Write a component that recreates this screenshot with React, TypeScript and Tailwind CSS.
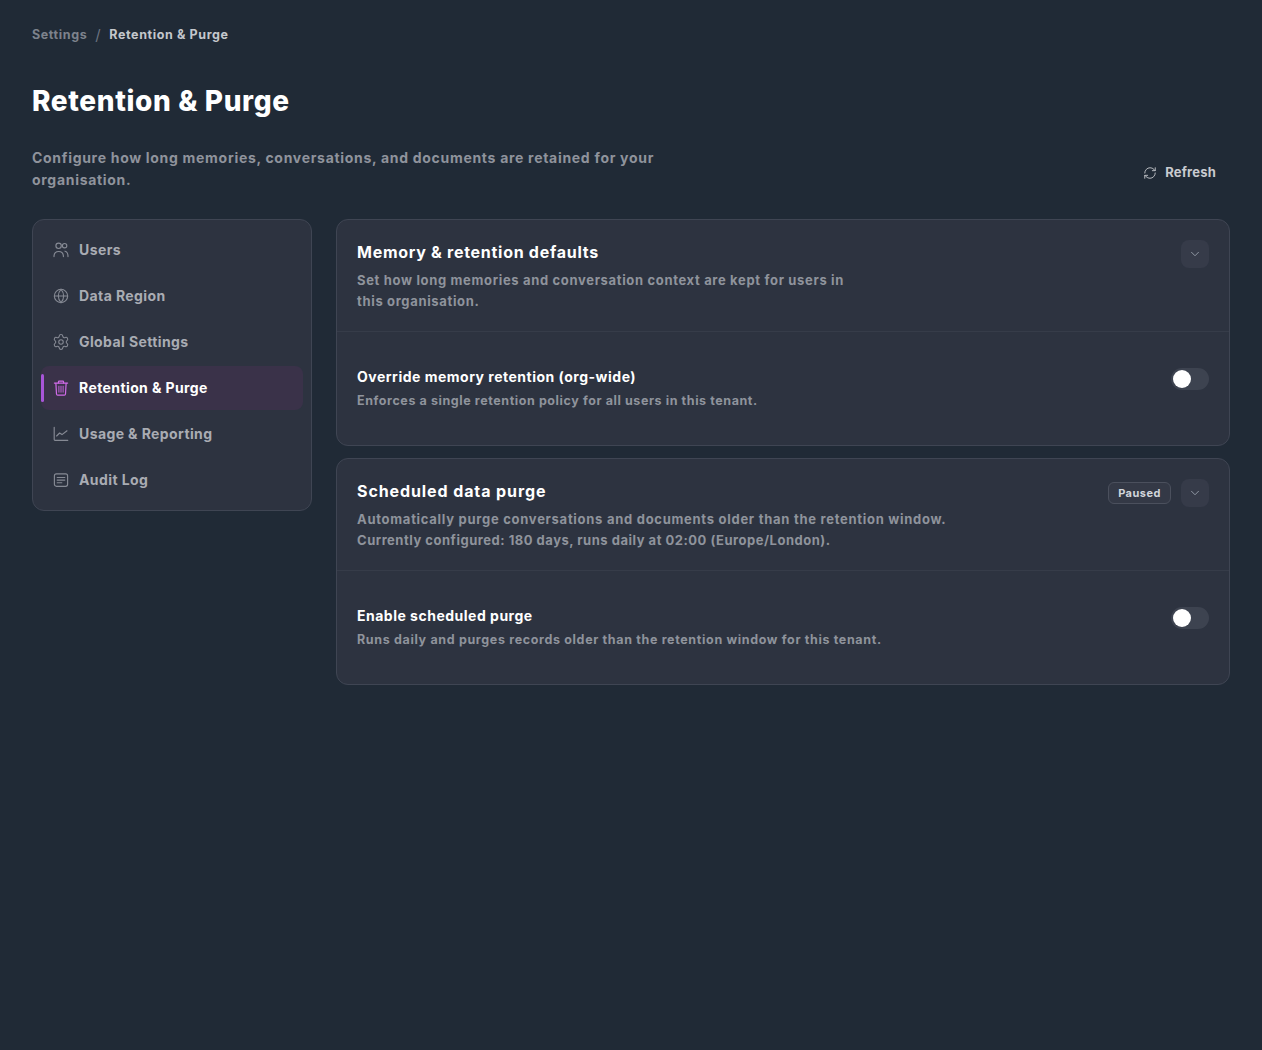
import type { ReactNode } from "react";
import { Globe, Settings, RefreshCw, ChevronDown } from "lucide-react";

function Ico({ children, cls }: { children: ReactNode; cls: string }) {
  return (
    <svg viewBox="0 0 16 16" fill="none" stroke="currentColor" strokeWidth="1.15" strokeLinecap="round" strokeLinejoin="round" className={`h-4 w-4 shrink-0 ${cls}`}>
      {children}
    </svg>
  );
}

const nav = [
  {
    label: "Users",
    icon: (c: string) => (
      <Ico cls={c}>
        <circle cx="5.6" cy="3.8" r="2.7" />
        <circle cx="11.6" cy="3.7" r="2.2" />
        <path d="M1 14.6c0-3.3 1.9-5.1 4.7-5.1s4.7 1.8 4.7 5.1" />
        <path d="M12 9.2c1.9.4 3 2.2 3 5.4" />
      </Ico>
    ),
  },
  { label: "Data Region", icon: (c: string) => <Globe className={`h-4 w-4 shrink-0 ${c}`} strokeWidth={1.6} /> },
  { label: "Global Settings", icon: (c: string) => <Settings className={`h-[18px] w-[18px] -mx-px shrink-0 ${c}`} strokeWidth={1.4} /> },
  {
    label: "Retention & Purge",
    active: true,
    icon: (c: string) => (
      <Ico cls={c}>
        <path d="M1.4 3.1h13.2" strokeWidth="1.3" />
        <path d="M5.4 3V1.9a.8.8 0 0 1 .8-.8h3.6a.8.8 0 0 1 .8.8V3" />
        <path d="M2.9 3.4l.6 10.6a1.2 1.2 0 0 0 1.2 1.1h6.6a1.2 1.2 0 0 0 1.2-1.1l.6-10.6" strokeWidth="1.2" />
        <path d="M5.9 6.2v6M8 6.2v6M10.1 6.2v6" strokeWidth="0.9" />
      </Ico>
    ),
  },
  {
    label: "Usage & Reporting",
    icon: (c: string) => (
      <Ico cls={c}>
        <path d="M1.2 1.2v12.3a.8.8 0 0 0 .8.8h12.8" />
        <path d="M3.6 10l3-3 2.4 1.6 5-3.8" />
      </Ico>
    ),
  },
  {
    label: "Audit Log",
    icon: (c: string) => (
      <Ico cls={c}>
        <rect x="1.4" y="1.9" width="13.2" height="12.4" rx="2" />
        <path d="M4.2 5.5h7.6M4.2 8.1h7.6M4.2 10.7h4.6" />
      </Ico>
    ),
  },
];

function Toggle() {
  return (
    <div className="flex h-[22px] w-[38px] shrink-0 items-center rounded-full bg-[#3d4350] px-0.5">
      <div className="h-[18px] w-[18px] rounded-full bg-white" />
    </div>
  );
}

function Chevron() {
  return (
    <div className="flex h-7 w-7 items-center justify-center rounded-lg bg-[#363b49]">
      <ChevronDown className="h-3.5 w-3.5 text-[#9ca3af]" strokeWidth={1.5} />
    </div>
  );
}

type Line = { text: string; cls: string };

function Card({ title, titleCls, desc, badge, rowTitle, rowDesc, rowDescCls }: { title: string; titleCls: string; desc: Line[]; badge?: string; rowTitle: string; rowDesc: string; rowDescCls: string }) {
  return (
    <section className="rounded-xl border border-[#3f4553] bg-[#2d3340]">
      <div className="flex items-start justify-between border-b border-[#363c49] px-5 pt-[19px] pb-[19px]">
        <div>
          <h2 className={`text-[16px] leading-[26px] font-bold text-white ${titleCls}`}>{title}</h2>
          <div className="mt-[5px] text-[13px] leading-[21px] font-bold text-[#8f939c]">
            {desc.map((d) => <div key={d.text} className={d.cls}>{d.text}</div>)}
          </div>
        </div>
        <div className="mt-px flex items-center gap-2.5">
          {badge && <span className="flex h-[22px] items-center rounded-md border border-[#4b505d] bg-[#343946] px-[9px] text-[11px] font-bold text-[#d1d5db] tracking-[0.5px]">{badge}</span>}
          <Chevron />
        </div>
      </div>
      <div className="flex items-start justify-between px-5 pt-[34px] pb-[34px]">
        <div>
          <div className="text-[14px] leading-[22px] font-bold text-white tracking-[0.5px]">{rowTitle}</div>
          <div className={`mt-[3px] text-[12.5px] leading-[20px] font-bold text-[#8f939c] ${rowDescCls}`}>{rowDesc}</div>
        </div>
        <div className="mt-[2px]"><Toggle /></div>
      </div>
    </section>
  );
}

export default function App() {
  return (
    <div className="min-h-[1050px] bg-[#202a36] px-8 pt-[25px] font-['Inter','Liberation_Sans',sans-serif]">
      <nav className="flex h-[20px] items-center text-[12.5px] font-bold tracking-[0.61px]">
        <span className="text-[#7d828c]">Settings</span>
        <span className="mx-2 font-normal text-[#6b7280] text-[15px]">/</span>
        <span className="text-[#c4c7cc]">Retention &amp; Purge</span>
      </nav>
      <h1 className="mt-[34px] text-[28px] leading-[44px] font-extrabold text-white tracking-[0.63px]">Retention &amp; Purge</h1>
      <div className="mt-[24px] flex items-center justify-between">
        <p className="w-[660px] text-[14px] leading-[22px] font-bold text-[#8f939c] tracking-[0.7px]">
          Configure how long memories, conversations, and documents are retained for your organisation.
        </p>
        <button className="mt-2 flex items-center gap-2 px-[14px] text-[13px] font-bold text-[#c9cbd0] tracking-[0.2px]">
          <RefreshCw className="h-3.5 w-3.5" strokeWidth={1.5} />
          Refresh
        </button>
      </div>
      <div className="mt-[28px] flex items-start gap-6">
        <aside className="flex w-[280px] shrink-0 flex-col gap-0.5 rounded-xl border border-[#3f4553] bg-[#2d3340] p-2">
          {nav.map(({ label, icon, active }) => (
            <div
              key={label}
              className={`relative flex h-11 items-center gap-2.5 rounded-lg px-3 text-[14px] font-bold tracking-[0.4px] ${active ? "bg-[#3a3249] text-white" : "text-[#a9acb3]"}`}
            >
              {active && <span className="absolute left-0 top-[8px] h-[28px] w-[3px] rounded-sm bg-[#a855d8]" />}
              {icon(active ? "text-[#d06be8]" : "text-[#868a94]")}
              <span className="-mt-[2px]">{label}</span>
            </div>
          ))}
        </aside>
        <main className="flex min-w-0 flex-1 flex-col gap-3">
          <Card
            title="Memory & retention defaults"
            titleCls="tracking-[0.72px]"
            desc={[
              { text: "Set how long memories and conversation context are kept for users in", cls: "tracking-[0.66px]" },
              { text: "this organisation.", cls: "tracking-[0.66px]" },
            ]}
            rowTitle="Override memory retention (org-wide)"
            rowDesc="Enforces a single retention policy for all users in this tenant."
            rowDescCls="tracking-[0.58px]"
          />
          <Card
            title="Scheduled data purge"
            titleCls="tracking-[0.9px]"
            desc={[
              { text: "Automatically purge conversations and documents older than the retention window.", cls: "tracking-[0.72px]" },
              { text: "Currently configured: 180 days, runs daily at 02:00 (Europe/London).", cls: "tracking-[0.51px]" },
            ]}
            badge="Paused"
            rowTitle="Enable scheduled purge"
            rowDesc="Runs daily and purges records older than the retention window for this tenant."
            rowDescCls="tracking-[0.65px]"
          />
        </main>
      </div>
    </div>
  );
}
